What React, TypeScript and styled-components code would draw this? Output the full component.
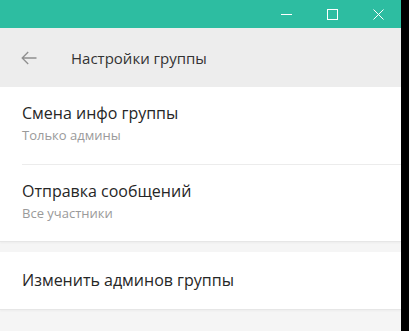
import React from "react";
import styled, { createGlobalStyle } from "styled-components";

const Global = createGlobalStyle`
  html, body { margin: 0; padding: 0; background: #000; }
  body { font-family: "Open Sans", "Noto Sans", sans-serif; }
`;

const Page = styled.div`
  width: 401px;
  height: 331px;
  background: #f5f5f5;
  display: flex;
  flex-direction: column;
  overflow: hidden;
`;

const TitleBar = styled.div`
  height: 28px;
  background: #2dbda1;
  display: flex;
  justify-content: flex-end;
  align-items: center;
  flex-shrink: 0;
`;

const WinButton = styled.div`
  width: 46px;
  height: 28px;
  display: flex;
  align-items: center;
  justify-content: center;
`;

const Header = styled.div`
  height: 59px;
  background: #ededed;
  display: flex;
  align-items: center;
  flex-shrink: 0;
`;

const BackButton = styled.div`
  width: 58px;
  padding-left: 21px;
  box-sizing: border-box;
  display: flex;
  align-items: center;
`;

const HeaderTitle = styled.div`
  font-size: 15px;
  color: #333;
  margin-left: 13px;
`;

const Section = styled.div`
  background: #fff;
  border-bottom: 1px solid #e6e6e6;
  box-shadow: 0 1px 2px rgba(0, 0, 0, 0.04);
  flex-shrink: 0;
`;

const Gap = styled.div`
  height: 10px;
  flex-shrink: 0;
`;

const Item = styled.div<{ $h: number; $divider?: boolean; $pb?: number }>`
  height: ${(p) => p.$h}px;
  margin-left: 22px;
  padding-bottom: ${(p) => p.$pb ?? 0}px;
  box-sizing: border-box;
  display: flex;
  flex-direction: column;
  justify-content: center;
  border-bottom: ${(p) => (p.$divider ? "1px solid #ececec" : "none")};
`;

const ItemTitle = styled.div`
  font-size: 16px;
  line-height: 21px;
  color: #262626;
`;

const ItemSub = styled.div`
  font-size: 13px;
  line-height: 17px;
  color: #9a9a9a;
  margin-top: 3px;
`;

export default function App() {
  return (
    <>
      <Global />
      <Page>
        <TitleBar>
          <WinButton>
            <svg width="11" height="11" viewBox="0 0 11 11">
              <line x1="0" y1="5.5" x2="11" y2="5.5" stroke="#fff" strokeWidth="1" />
            </svg>
          </WinButton>
          <WinButton>
            <svg width="11" height="11" viewBox="0 0 11 11">
              <rect x="0.5" y="0.5" width="10" height="10" fill="none" stroke="#fff" strokeWidth="1" />
            </svg>
          </WinButton>
          <WinButton>
            <svg width="11" height="11" viewBox="0 0 11 11">
              <path d="M0.5 0.5 L10.5 10.5 M10.5 0.5 L0.5 10.5" stroke="#fff" strokeWidth="1" />
            </svg>
          </WinButton>
        </TitleBar>
        <Header>
          <BackButton>
            <svg width="16" height="14" viewBox="0 0 16 14">
              <path d="M15.5 7 H1.2 M7.2 1 L1.2 7 L7.2 13" fill="none" stroke="#8f8f8f" strokeWidth="1.3" />
            </svg>
          </BackButton>
          <HeaderTitle>Настройки группы</HeaderTitle>
        </Header>
        <Section>
          <Item $h={78} $pb={4} $divider>
            <ItemTitle>Смена инфо группы</ItemTitle>
            <ItemSub>Только админы</ItemSub>
          </Item>
          <Item $h={76} $pb={4}>
            <ItemTitle>Отправка сообщений</ItemTitle>
            <ItemSub>Все участники</ItemSub>
          </Item>
        </Section>
        <Gap />
        <Section>
          <Item $h={57}>
            <ItemTitle>Изменить админов группы</ItemTitle>
          </Item>
        </Section>
      </Page>
    </>
  );
}
